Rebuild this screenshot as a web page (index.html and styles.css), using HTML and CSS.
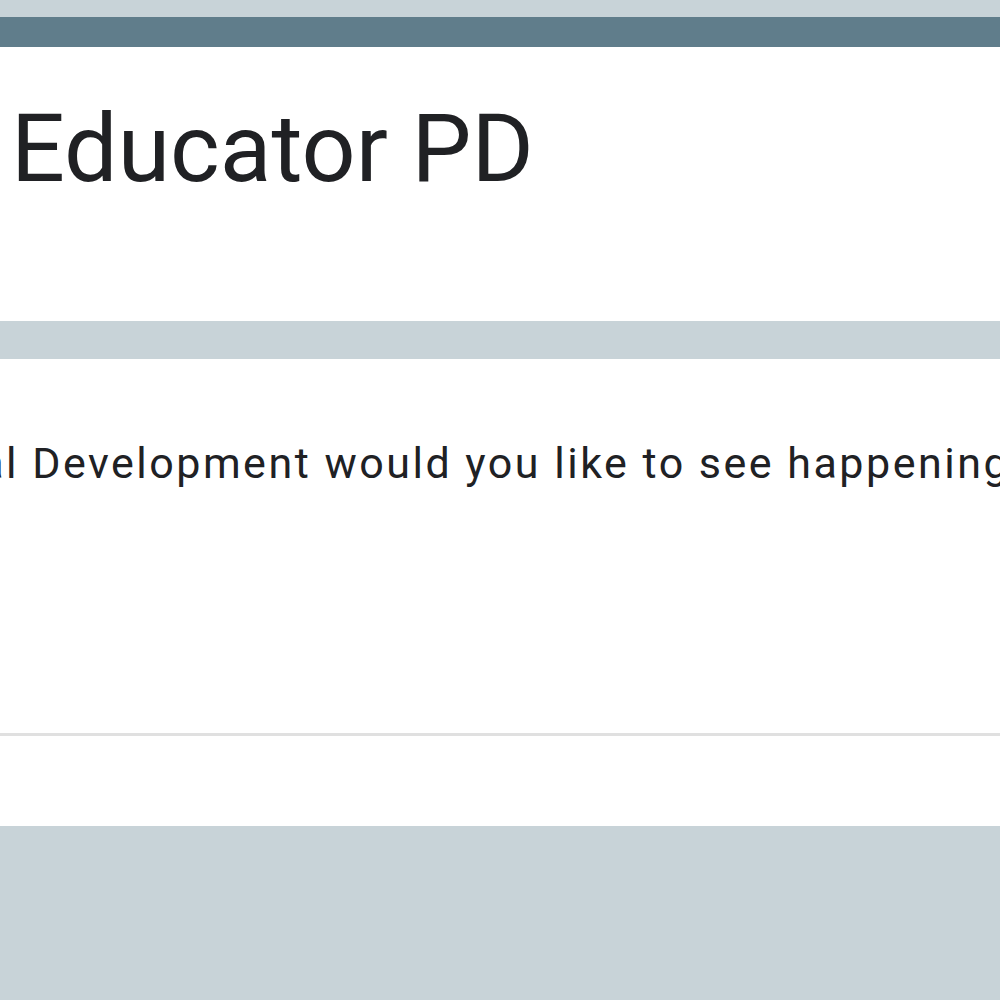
FILE: index.html
```html
<!DOCTYPE html>
<html lang="en">
<head>
  <meta charset="UTF-8">
  <title>Educator PD</title>
  <link rel="stylesheet" href="styles.css">
</head>
<body>

<div class="form">
  <div class="form-header">
    <h1 class="form-title">Educator PD</h1>
  </div>

  <div class="question">
    <div class="question-text">Professional Development would you like to see happening at your school?</div>
    <div class="answer">
      <div class="answer-line"></div>
    </div>
  </div>
</div>

</body>
</html>
```

FILE: styles.css
```css
body {
  margin: 0;
  background-color: #c8d3d8;
  font-family: Roboto, Arial, sans-serif;
  color: #202124;
  overflow: hidden;
  height: 1000px;
}

.form {
  padding-top: 17px;
}

.form-header {
  background: white;
  border-top: 30px solid #607d8b;
  height: 274px;
  padding-left: 11px;
}

.form-title {
  margin: 0;
  padding-top: 47px;
  font-size: 95px;
  font-weight: 400;
  line-height: 110px;
  white-space: nowrap;
}

.question {
  background: white;
  margin-top: 38px;
  height: 467px;
  overflow: hidden;
}

.question-text {
  font-size: 43px;
  line-height: 50px;
  letter-spacing: 2.5px;
  padding-top: 79px;
  margin-left: -251px;
  white-space: nowrap;
}

.answer {
  padding-top: 245px;
}

.answer-line {
  height: 3px;
  background: #e0e0e0;
}
```
